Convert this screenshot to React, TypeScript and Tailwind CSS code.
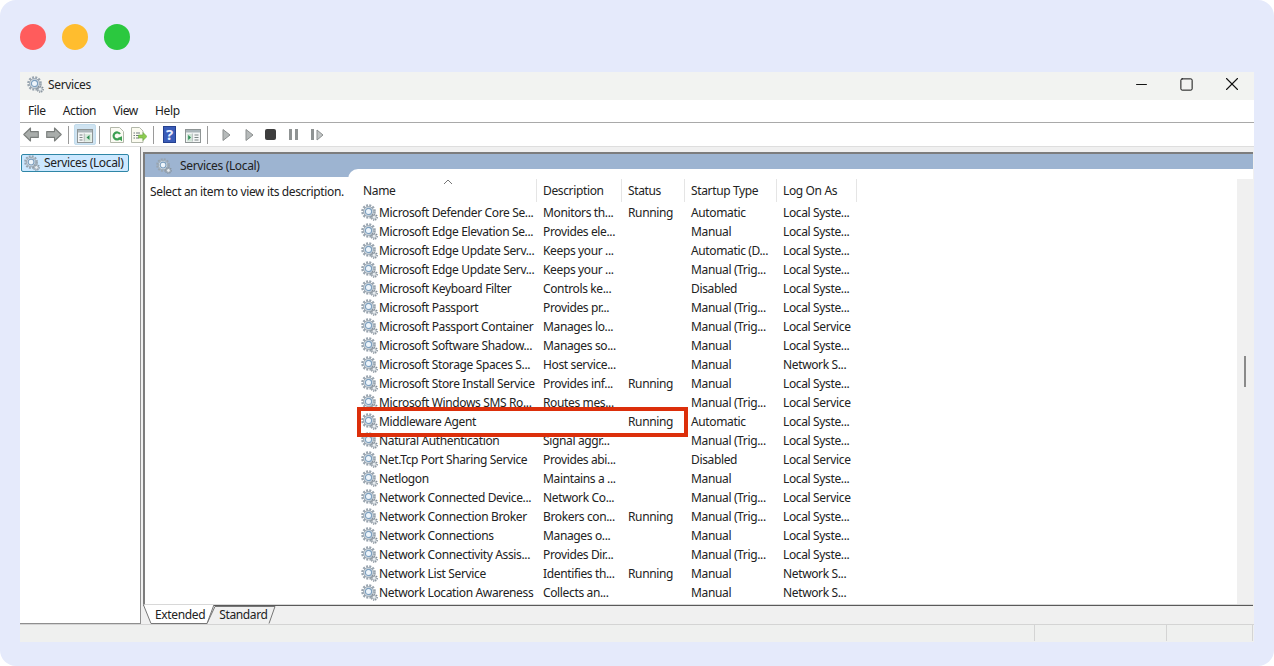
import React from 'react';
import { Minus, Square, X } from 'lucide-react';

const GearIcon = ({ className = 'w-[17px] h-[17px]' }: { className?: string }) => (
  <svg viewBox="0 0 17 17" className={className} fill="none">
    <circle cx="7.5" cy="7.5" r="6.2" stroke="#98a4af" strokeWidth="2.2" strokeDasharray="2 1.25" />
    <circle cx="7.5" cy="7.5" r="5" fill="#d3dce3" stroke="#9aa6b1" strokeWidth="1" />
    <circle cx="7.5" cy="7.5" r="3.1" fill="#eef5fb" stroke="#7ea0bf" strokeWidth="1.2" />
    <circle cx="13.2" cy="13.2" r="2.9" stroke="#848f99" strokeWidth="1.5" strokeDasharray="1.2 1" />
    <circle cx="13.2" cy="13.2" r="2" fill="#e8ecef" stroke="#929da7" strokeWidth="0.8" />
  </svg>
);

const BackArrow = ({ flip = false }: { flip?: boolean }) => (
  <svg viewBox="0 0 16 15" className={flip ? 'w-4 h-[15px] -scale-x-100' : 'w-4 h-[15px]'}>
    <path d="M0.8 7.5 L7.5 1 V4.6 H15.3 V10.4 H7.5 V14 Z" fill="#a9adab" stroke="#7a7e7c" strokeWidth="1.1" strokeLinejoin="round" />
  </svg>
);

const WindowPaneIcon = ({ right = false }: { right?: boolean }) => (
  <svg viewBox="0 0 16 14" className="w-4 h-[14px]">
    <rect x="0.5" y="0.5" width="15" height="13" fill="#f4f6f6" stroke="#8f9595" />
    <rect x="1" y="1" width="14" height="2.5" fill="#aab5b9" />
    <rect x="2.5" y="5.5" width="3" height="1" fill="#7d8585" />
    <rect x="2.5" y="8" width="3" height="1" fill="#7d8585" />
    <rect x="2.5" y="10.5" width="3" height="1" fill="#7d8585" />
    <rect x="6.8" y="4.5" width="0.8" height="8" fill="#9aa2a2" />
    {right ? (
      <>
        <path d="M2 5 H7 V12.5 H2 Z" fill="#cfe3d6" />
        <path d="M3.2 6 L6 8.5 L3.2 11 Z" fill="#2f8f55" />
        <rect x="9.5" y="5.5" width="4" height="1" fill="#7d8585" />
        <rect x="9.5" y="8" width="4" height="1" fill="#7d8585" />
        <rect x="9.5" y="10.5" width="4" height="1" fill="#7d8585" />
      </>
    ) : (
      <>
        <path d="M8 5 H14.5 V12.5 H8 Z" fill="#d7e9dc" />
        <path d="M12.5 6 L9.5 8.5 L12.5 11 Z" fill="#2f8f55" />
      </>
    )}
  </svg>
);

const RefreshIcon = () => (
  <svg viewBox="0 0 14 16" className="w-[14px] h-4">
    <path d="M0.5 0.5 H9.5 L13.5 4.5 V15.5 H0.5 Z" fill="#fbfbf4" stroke="#b3b8aa" />
    <path d="M10 7 A3.5 3.5 0 1 0 9.6 11.4" fill="none" stroke="#3c9f52" strokeWidth="2.2" />
    <path d="M7.5 11 L12 9.2 L12 14.2 Z" fill="#3c9f52" />
  </svg>
);

const ExportIcon = () => (
  <svg viewBox="0 0 16 16" className="w-4 h-4">
    <path d="M0.5 0.5 H8.5 L12 4 V15.5 H0.5 Z" fill="#fbfbf0" stroke="#b3b8aa" />
    <path d="M2.5 6 H4 M2.5 8.5 H4 M2.5 11 H4 M5 6 H9 M5 8.5 H8 M5 11 H8" stroke="#5d6b70" strokeWidth="0.9" />
    <path d="M7.5 8 H12 V5.5 L16 9.5 L12 13.5 V11 H7.5 Z" fill="#8ccb4f" stroke="#6aa83f" strokeWidth="0.6" />
  </svg>
);

const ToolbarSep = ({ className }: { className: string }) => (
  <div className={`w-px h-[18px] bg-[#9a9a9a] ${className}`} />
);

const Toolbar = () => (
  <div className="flex items-center h-[23px] bg-white pl-[3px]">
    <BackArrow />
    <div className="ml-[7px]"><BackArrow flip /></div>
    <ToolbarSep className="ml-[6px]" />
    <div className="ml-[5px] w-[22px] h-[21px] bg-[#cfe3f1] border border-[#c2dcec] rounded-[2px] flex items-center justify-center pt-[3px]">
      <WindowPaneIcon />
    </div>
    <ToolbarSep className="ml-[3px]" />
    <div className="ml-[10px]"><RefreshIcon /></div>
    <div className="ml-[7px]"><ExportIcon /></div>
    <ToolbarSep className="ml-[6px]" />
    <div className="ml-[9px] w-[13px] h-[17px] bg-[#3a5cb8] border border-[#24408f] flex items-center justify-center text-[#e6ecff] text-[15px] font-bold leading-none">?</div>
    <div className="ml-[9px] pt-[2px]"><WindowPaneIcon right /></div>
    <ToolbarSep className="ml-[6px]" />
    <svg viewBox="0 0 9 14" className="ml-[14px] w-[9px] h-[14px]"><path d="M1 1.5 L8 7 L1 12.5 Z" fill="#b6baba" stroke="#8b8f8f" /></svg>
    <svg viewBox="0 0 9 14" className="ml-[14px] w-[9px] h-[14px]"><path d="M1 1.5 L8 7 L1 12.5 Z" fill="#b6baba" stroke="#8b8f8f" /></svg>
    <div className="ml-[11px] w-[11px] h-[11px] bg-[#3d3d3d] rounded-[2px]" />
    <div className="ml-[13px] flex gap-[3px]">
      <div className="w-[3px] h-[11px] bg-[#8f9393]" />
      <div className="w-[3px] h-[11px] bg-[#8f9393]" />
    </div>
    <div className="ml-[13px] flex items-center gap-[2px]">
      <div className="w-[3px] h-[11px] bg-[#8f9393]" />
      <svg viewBox="0 0 8 12" className="w-2 h-3"><path d="M1 1 L7 6 L1 11 Z" fill="#c2c5c5" stroke="#8b8f8f" /></svg>
    </div>
  </div>
);

const rows = [
  ['Microsoft Defender Core Se...', 'Monitors th...', 'Running', 'Automatic', 'Local Syste...'],
  ['Microsoft Edge Elevation Se...', 'Provides ele...', '', 'Manual', 'Local Syste...'],
  ['Microsoft Edge Update Serv...', 'Keeps your ...', '', 'Automatic (D...', 'Local Syste...'],
  ['Microsoft Edge Update Serv...', 'Keeps your ...', '', 'Manual (Trig...', 'Local Syste...'],
  ['Microsoft Keyboard Filter', 'Controls ke...', '', 'Disabled', 'Local Syste...'],
  ['Microsoft Passport', 'Provides pr...', '', 'Manual (Trig...', 'Local Syste...'],
  ['Microsoft Passport Container', 'Manages lo...', '', 'Manual (Trig...', 'Local Service'],
  ['Microsoft Software Shadow...', 'Manages so...', '', 'Manual', 'Local Syste...'],
  ['Microsoft Storage Spaces S...', 'Host service...', '', 'Manual', 'Network S...'],
  ['Microsoft Store Install Service', 'Provides inf...', 'Running', 'Manual', 'Local Syste...'],
  ['Microsoft Windows SMS Ro...', 'Routes mes...', '', 'Manual (Trig...', 'Local Service'],
  ['Middleware Agent', '', 'Running', 'Automatic', 'Local Syste...'],
  ['Natural Authentication', 'Signal aggr...', '', 'Manual (Trig...', 'Local Syste...'],
  ['Net.Tcp Port Sharing Service', 'Provides abi...', '', 'Disabled', 'Local Service'],
  ['Netlogon', 'Maintains a ...', '', 'Manual', 'Local Syste...'],
  ['Network Connected Device...', 'Network Co...', '', 'Manual (Trig...', 'Local Service'],
  ['Network Connection Broker', 'Brokers con...', 'Running', 'Manual (Trig...', 'Local Syste...'],
  ['Network Connections', 'Manages o...', '', 'Manual', 'Local Syste...'],
  ['Network Connectivity Assis...', 'Provides Dir...', '', 'Manual (Trig...', 'Local Syste...'],
  ['Network List Service', 'Identifies th...', 'Running', 'Manual', 'Network S...'],
  ['Network Location Awareness', 'Collects an...', '', 'Manual', 'Network S...'],
];

const ServiceRow = ({ row }: { row: string[] }) => (
  <div className="flex h-[19px] items-center whitespace-nowrap">
    <div className="w-[179px] flex items-center pl-[3px] gap-px">
      <GearIcon className="w-[17px] h-[17px] shrink-0" />
      <span>{row[0]}</span>
    </div>
    <div className="w-[85px] pl-[6px]">{row[1]}</div>
    <div className="w-[63px] pl-[6px]">{row[2]}</div>
    <div className="w-[92px] pl-[6px]">{row[3]}</div>
    <div className="w-[80px] pl-[6px]">{row[4]}</div>
  </div>
);

const HeaderCell = ({ label, width }: { label: string; width: string }) => (
  <div className={`${width} h-[23px] flex items-center pl-[6px] border-r border-[#e5e5e5] relative`}>{label}</div>
);

const App = () => {
  return (
    <div
      className="w-[1274px] h-[666px] bg-[#e5eafb] rounded-2xl px-5 pt-6 overflow-hidden text-xs text-[#222] tracking-[-0.36px]"
      style={{ fontFamily: '"Noto Sans", sans-serif' }}
    >
      <div className="flex gap-4 h-[26px] mb-[22px]">
        <div className="w-[26px] h-[26px] rounded-full bg-[#ff5c5c]" />
        <div className="w-[26px] h-[26px] rounded-full bg-[#ffbd2e]" />
        <div className="w-[26px] h-[26px] rounded-full bg-[#2bc83f]" />
      </div>

      <div className="h-[570px] flex flex-col bg-[#f0f0f0]">
        {/* title bar */}
        <div className="h-7 shrink-0 bg-[#f2f3f1] flex items-center pl-[7px]">
          <GearIcon className="w-[17px] h-[17px] mb-[3px]" />
          <span className="ml-[4px] mb-[2px]">Services</span>
          <div className="ml-auto flex items-center mb-[4px]">
            <Minus className="w-[17px] h-[17px] text-[#111] mr-[29px]" strokeWidth={1.4} />
            <Square className="w-[15px] h-[15px] text-[#111] mr-[27px]" strokeWidth={1.6} />
            <X className="w-[22px] h-[22px] text-[#111] mr-[11px]" strokeWidth={1.2} />
          </div>
        </div>

        {/* menu */}
        <div className="h-[23px] shrink-0 bg-white border-b border-[#a9a9a9] flex items-center pl-2 gap-[17px]">
          <span>File</span>
          <span>Action</span>
          <span>View</span>
          <span>Help</span>
        </div>

        <Toolbar />

        {/* body */}
        <div className="flex-1 flex min-h-0 border-t border-[#dedede]">
          <div className="w-[121px] shrink-0 bg-white border-r border-b border-[#8f8f8f] pl-px pt-[7px]">
            <div className="w-[108px] h-[18px] bg-[#cce8ff] border border-[#2f86a6] rounded-[2px] flex items-center pl-[2px] gap-[4px] whitespace-nowrap">
              <GearIcon className="w-4 h-4 shrink-0" />
              <span>Services (Local)</span>
            </div>
          </div>

          <div className="flex-1 min-w-0 flex flex-col ml-[2px] mt-[5px] pr-px">
            <div className="flex-1 min-h-0 flex flex-col border-l-2 border-t-2 border-b border-t-[#7d7d7d] border-l-[#7d7d7d] border-b-[#d8d8d8] bg-white">
              <div className="h-[23px] shrink-0 bg-[#9db4d1] flex items-start pl-[11px] pt-[4px] gap-[8px]">
                <GearIcon className="w-4 h-4" />
                <span>Services (Local)</span>
              </div>
              <div className="flex-1 min-h-0 flex">
                <div className="w-[203px] shrink-0 pl-[5px] pt-[7px] whitespace-nowrap">
                  Select an item to view its description.
                </div>
                <div className="flex-1 min-w-0 -mt-[8px] bg-white rounded-tl-[10px] flex pt-[10px]">
                  <div className="flex-1 min-w-0 overflow-hidden pl-[10px]">
                    <div className="flex">
                      <div className="w-[179px] h-[23px] flex items-center pl-[5px] border-r border-[#e5e5e5] relative">
                        Name
                        <svg viewBox="0 0 10 6" className="absolute left-[85px] top-0 w-[10px] h-[6px]" fill="none">
                          <path d="M1 5 L5 1 L9 5" stroke="#777" strokeWidth="1" />
                        </svg>
                      </div>
                      <HeaderCell label="Description" width="w-[85px]" />
                      <HeaderCell label="Status" width="w-[63px]" />
                      <HeaderCell label="Startup Type" width="w-[92px]" />
                      <HeaderCell label="Log On As" width="w-[80px]" />
                    </div>
                    <div className="mt-px">
                      {rows.map((row, index) => (
                        <ServiceRow key={index} row={row} />
                      ))}
                    </div>
                  </div>
                  <div className="w-4 shrink-0 bg-[#f0f0f0] relative">
                    <div className="absolute left-[7px] top-[177px] w-[2px] h-[31px] bg-[#8a8a8a]" />
                  </div>
                </div>
              </div>
            </div>
            {/* tabs */}
            <div className="h-[19px] shrink-0 relative border-t border-[#5a5a5a] bg-[#f0f0f0]">
              <svg className="absolute left-0 -top-px w-[140px] h-[19px]" viewBox="0 0 140 19" fill="none">
                <path d="M64 18.5 L72 1.5 H132 L126 18.5" fill="#f0f0f0" stroke="#777" strokeWidth="1" />
                <path d="M0.5 0 L8 18.5 H64 L70.5 0 Z" fill="#fff" />
                <path d="M0.5 0 L8 18.5 H64 L70.5 1" stroke="#777" strokeWidth="1" />
              </svg>
              <div className="relative flex leading-[18px]">
                <span className="ml-[12px]">Extended</span>
                <span className="ml-[14px]">Standard</span>
              </div>
            </div>
          </div>
        </div>

        {/* status bar */}
        <div className="h-[18px] shrink-0 bg-[#eff0ef] border-t border-[#d4d4d4] flex justify-end pr-px">
          <div className="w-[133px] h-[16px] border-x border-[#d4d4d4]" />
          <div className="w-[86px] h-[16px] border-r border-[#d4d4d4]" />
        </div>
      </div>

      {/* highlight over the Middleware Agent row */}
      <div className="absolute left-[357px] top-[407px] w-[331px] h-[30px] border-4 border-[#dc2f0b] pointer-events-none" />
    </div>
  );
};

export default App;
